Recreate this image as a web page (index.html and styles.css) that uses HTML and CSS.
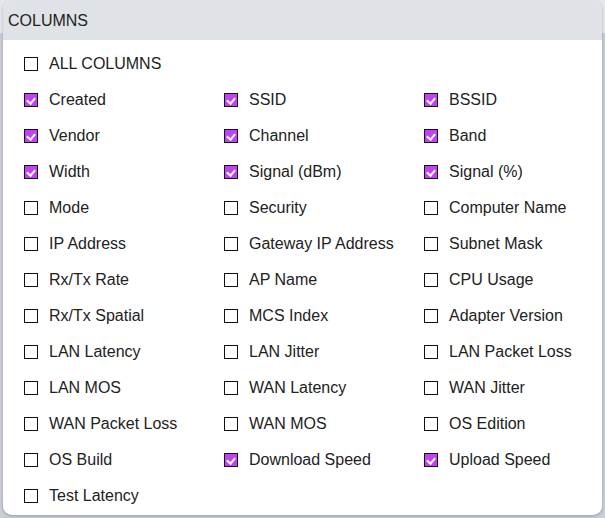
FILE: index.html
```html
<!DOCTYPE html>
<html>
<head>
<meta charset="utf-8">
<link rel="stylesheet" href="styles.css">
</head>
<body>
<div class="popup">
  <div class="popup-header">COLUMNS</div>
  <div class="popup-body">
    <label class="opt full"><span class="box"></span>ALL COLUMNS</label>
    <label class="opt"><span class="box on"></span>Created</label>
    <label class="opt"><span class="box on"></span>SSID</label>
    <label class="opt"><span class="box on"></span>BSSID</label>
    <label class="opt"><span class="box on"></span>Vendor</label>
    <label class="opt"><span class="box on"></span>Channel</label>
    <label class="opt"><span class="box on"></span>Band</label>
    <label class="opt"><span class="box on"></span>Width</label>
    <label class="opt"><span class="box on"></span>Signal (dBm)</label>
    <label class="opt"><span class="box on"></span>Signal (%)</label>
    <label class="opt"><span class="box"></span>Mode</label>
    <label class="opt"><span class="box"></span>Security</label>
    <label class="opt"><span class="box"></span>Computer Name</label>
    <label class="opt"><span class="box"></span>IP Address</label>
    <label class="opt"><span class="box"></span>Gateway IP Address</label>
    <label class="opt"><span class="box"></span>Subnet Mask</label>
    <label class="opt"><span class="box"></span>Rx/Tx Rate</label>
    <label class="opt"><span class="box"></span>AP Name</label>
    <label class="opt"><span class="box"></span>CPU Usage</label>
    <label class="opt"><span class="box"></span>Rx/Tx Spatial</label>
    <label class="opt"><span class="box"></span>MCS Index</label>
    <label class="opt"><span class="box"></span>Adapter Version</label>
    <label class="opt"><span class="box"></span>LAN Latency</label>
    <label class="opt"><span class="box"></span>LAN Jitter</label>
    <label class="opt"><span class="box"></span>LAN Packet Loss</label>
    <label class="opt"><span class="box"></span>LAN MOS</label>
    <label class="opt"><span class="box"></span>WAN Latency</label>
    <label class="opt"><span class="box"></span>WAN Jitter</label>
    <label class="opt"><span class="box"></span>WAN Packet Loss</label>
    <label class="opt"><span class="box"></span>WAN MOS</label>
    <label class="opt"><span class="box"></span>OS Edition</label>
    <label class="opt"><span class="box"></span>OS Build</label>
    <label class="opt"><span class="box on"></span>Download Speed</label>
    <label class="opt"><span class="box on"></span>Upload Speed</label>
    <label class="opt"><span class="box"></span>Test Latency</label>
  </div>
</div>
</body>
</html>
```
FILE: styles.css
```css
html, body {
  margin: 0;
  padding: 0;
}
body {
  width: 605px;
  height: 518px;
  overflow: hidden;
  background: linear-gradient(to bottom, #e6e7ea 0, #e6e7ea 33px, #c9cdd8 33px, #c9cdd8 100%);
  font-family: "Liberation Sans", Arial, sans-serif;
  color: #222;
}
.popup {
  margin-left: 3px;
  width: 599px;
  height: 515px;
  background: #fff;
  border-radius: 9px;
  overflow: hidden;
  box-shadow: 0 1px 3px rgba(0,0,0,0.25);
}
.popup-header {
  height: 40px;
  background: #dfe2e6;
  font-size: 16px;
  line-height: 41px;
  padding-left: 5px;
  color: #222;
}
.popup-body {
  display: grid;
  grid-template-columns: 200px 200px 1fr;
  grid-auto-rows: 36px;
  padding: 6px 0 0 21px;
}
.opt {
  display: flex;
  align-items: center;
  font-size: 16px;
  color: #222;
}
.opt.full {
  grid-column: 1 / -1;
}
.box {
  box-sizing: border-box;
  width: 14px;
  height: 14px;
  border: 1.5px solid #111;
  margin-right: 11px;
  flex: none;
  position: relative;
}
.box.on {
  background: #c143f5;
}
.box.on::after {
  content: "";
  position: absolute;
  left: 3px;
  top: 2px;
  width: 4px;
  height: 6px;
  border-right: 2px solid #fff;
  border-bottom: 2px solid #fff;
  transform: rotate(40deg);
}
```
